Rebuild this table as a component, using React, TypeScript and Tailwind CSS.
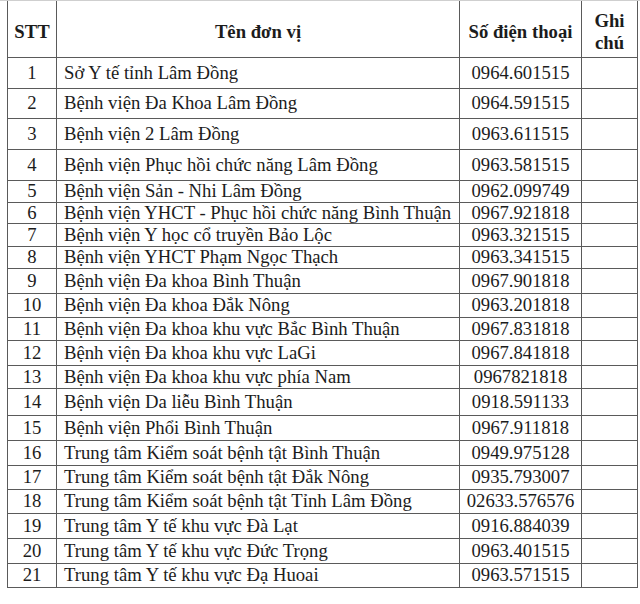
import React from "react";

const rows: [string, string, string, number][] = [
  ["1", "Sở Y tế tỉnh Lâm Đồng", "0964.601515", 31],
  ["2", "Bệnh viện Đa Khoa Lâm Đồng", "0964.591515", 30],
  ["3", "Bệnh viện 2 Lâm Đồng", "0963.611515", 31],
  ["4", "Bệnh viện Phục hồi chức năng Lâm Đồng", "0963.581515", 31],
  ["5", "Bệnh viện Sản - Nhi Lâm Đồng", "0962.099749", 22],
  ["6", "Bệnh viện YHCT - Phục hồi chức năng Bình Thuận", "0967.921818", 21],
  ["7", "Bệnh viện Y học cổ truyền Bảo Lộc", "0963.321515", 23],
  ["8", "Bệnh viện YHCT Phạm Ngọc Thạch", "0963.341515", 22],
  ["9", "Bệnh viện Đa khoa Bình Thuận", "0967.901818", 25],
  ["10", "Bệnh viện Đa khoa Đắk Nông", "0963.201818", 24],
  ["11", "Bệnh viện Đa khoa khu vực Bắc Bình Thuận", "0967.831818", 23],
  ["12", "Bệnh viện Đa khoa khu vực LaGi", "0967.841818", 25],
  ["13", "Bệnh viện Đa khoa khu vực phía Nam", "0967821818", 23],
  ["14", "Bệnh viện Da liễu Bình Thuận", "0918.591133", 27],
  ["15", "Bệnh viện Phổi Bình Thuận", "0967.911818", 25],
  ["16", "Trung tâm Kiểm soát bệnh tật Bình Thuận", "0949.975128", 25],
  ["17", "Trung tâm Kiểm soát bệnh tật Đắk Nông", "0935.793007", 24],
  ["18", "Trung tâm Kiểm soát bệnh tật Tỉnh Lâm Đồng", "02633.576576", 24],
  ["19", "Trung tâm Y tế khu vực Đà Lạt", "0916.884039", 25],
  ["20", "Trung tâm Y tế khu vực Đức Trọng", "0963.401515", 25],
  ["21", "Trung tâm Y tế khu vực Đạ Huoai", "0963.571515", 24],
];

export default function App() {
  return (
    <div className="w-[640px] h-[604px] bg-white overflow-hidden text-[#1c1c1c] font-['Liberation_Serif','Times_New_Roman',serif]">
      <div className="h-[1px] bg-[#cfcfcf]" />
      <div className="pl-[7px]">
        <table className="border-collapse table-fixed w-[630px] text-[18.7px] leading-[20px]">
          <colgroup>
            <col className="w-[49px]" />
            <col className="w-[403px]" />
            <col className="w-[122px]" />
            <col className="w-[56px]" />
          </colgroup>
          <thead>
            <tr className="h-[56px] font-bold">
              <th className="border-[1.5px] border-[#5a5a5a] border-t-0 text-center align-middle pt-[6px] px-0 pb-0">STT</th>
              <th className="border-[1.5px] border-[#5a5a5a] border-t-0 text-center align-middle pt-[6px] px-0 pb-0">Tên đơn vị</th>
              <th className="border-[1.5px] border-[#5a5a5a] border-t-0 text-center align-middle pt-[6px] px-0 pb-0">Số điện thoại</th>
              <th className="border-[1.5px] border-[#5a5a5a] border-t-0 text-center align-middle pt-[6px] px-0 pb-0 leading-[22px]">
                Ghi
                <br />
                chú
              </th>
            </tr>
          </thead>
          <tbody>
            {rows.map(([n, name, phone, h]) => (
              <tr key={n} style={{ height: h }}>
                <td className="border-[1.5px] border-[#5a5a5a] text-center align-middle p-0">{n}</td>
                <td className="border-[1.5px] border-[#5a5a5a] align-middle py-0 pl-[7px] pr-0 whitespace-nowrap">{name}</td>
                <td className="border-[1.5px] border-[#5a5a5a] text-center align-middle p-0">{phone}</td>
                <td className="border-[1.5px] border-[#5a5a5a] p-0" />
              </tr>
            ))}
          </tbody>
        </table>
      </div>
    </div>
  );
}
